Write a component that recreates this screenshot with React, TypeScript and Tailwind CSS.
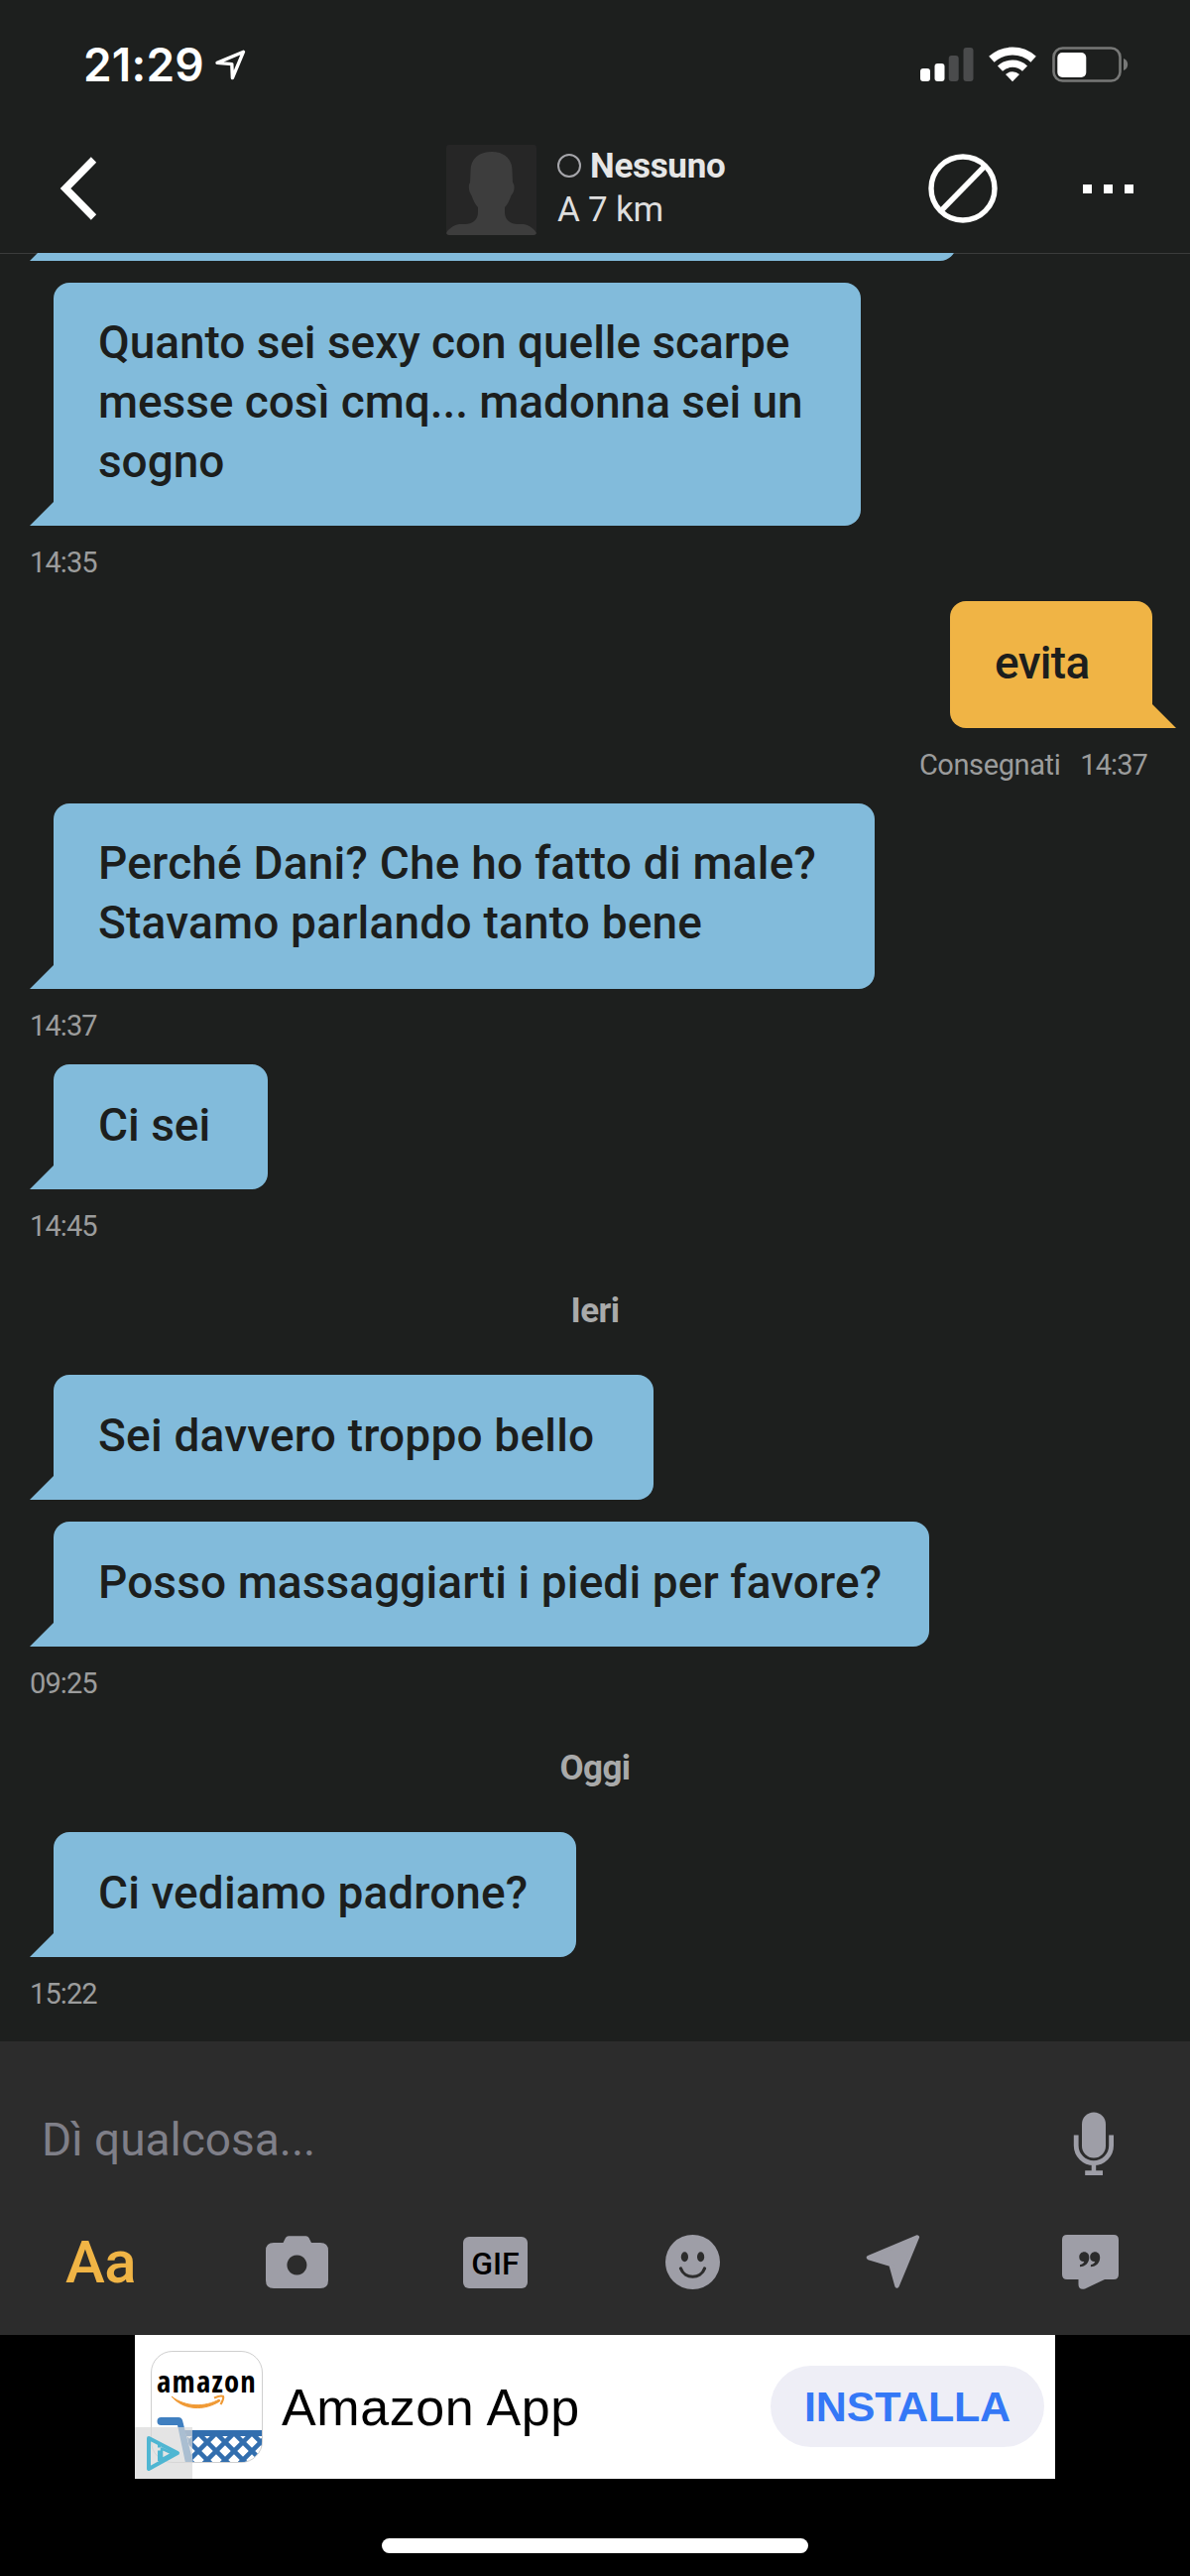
import type { ReactNode } from 'react'
import clsx from 'clsx'

type Message = {
  lines: string[]
  box: string
  mine?: boolean
  status?: string
  time?: string
}

const SECTIONS: { day?: string; messages: Message[] }[] = [
  {
    messages: [
      {
        lines: ['Quanto sei sexy con quelle scarpe', 'messe così cmq... madonna sei un', 'sogno'],
        box: 'w-[814px] h-[245px] pt-[30px] tracking-[-0.05px]',
        time: '14:35',
      },
      {
        lines: ['evita'],
        box: 'w-[204px] h-[128px] pt-[32px] tracking-[-0.7px]',
        mine: true,
        status: 'Consegnati',
        time: '14:37',
      },
      {
        lines: ['Perché Dani? Che ho fatto di male?', 'Stavamo parlando tanto bene'],
        box: 'w-[828px] h-[187px] pt-[30px] tracking-[0.2px]',
        time: '14:37',
      },
      { lines: ['Ci sei'], box: 'w-[216px] h-[126px] pt-[31px]', time: '14:45' },
    ],
  },
  {
    day: 'Ieri',
    messages: [
      { lines: ['Sei davvero troppo bello'], box: 'w-[605px] h-[126px] pt-[31px] tracking-[0.2px]' },
      {
        lines: ['Posso massaggiarti i piedi per favore?'],
        box: 'w-[883px] h-[126px] pt-[31px] tracking-[0.1px]',
        time: '09:25',
      },
    ],
  },
  {
    day: 'Oggi',
    messages: [{ lines: ['Ci vediamo padrone?'], box: 'w-[527px] h-[126px] pt-[31px] tracking-[0.1px]', time: '15:22' }],
  },
]

function StatusBar() {
  return (
    <div className="flex h-[125px] items-start pt-[45px] pl-[84px] pr-[62px]">
      <span className="w-[131px] font-['Inter'] text-[46px] font-semibold leading-[41px] tracking-[0.2px] text-white">
        21:29
      </span>
      <svg width="36" height="36" viewBox="0 0 36 36" className="mt-[3px]" fill="none">
        <path d="M30.5 4.2L4 15.4l14.8 1.2.6 14z" stroke="#fff" strokeWidth="3.4" strokeLinejoin="round" />
      </svg>
      <div className="ml-auto flex items-start pt-[2px]">
        <svg width="54" height="36" viewBox="0 0 54 36">
          <rect x="0" y="22" width="10" height="13" rx="3" fill="#fff" />
          <rect x="14.5" y="17" width="10" height="18" rx="3" fill="#fff" />
          <rect x="28.7" y="9" width="10" height="26" rx="3" fill="#4a4b4c" />
          <rect x="43.5" y="1" width="10" height="34" rx="3" fill="#4a4b4c" />
        </svg>
        <svg width="48" height="36" viewBox="0 0 48 36" className="ml-[15px]" fill="none" stroke="#fff">
          <path d="M2.9 12.8A31 31 0 0 1 45.1 12.8" strokeWidth="8" />
          <path d="M11.5 22.1A18.3 18.3 0 0 1 36.5 22.1" strokeWidth="7.4" />
          <path d="M24 35.2L17 28A10.3 10.3 0 0 1 31 28Z" fill="#fff" stroke="none" />
        </svg>
        <svg width="77" height="36" viewBox="0 0 77 36" className="ml-[16px]">
          <rect x="1.5" y="1.5" width="67" height="33" rx="9" fill="none" stroke="#777877" strokeWidth="2.6" />
          <rect x="5.3" y="6" width="29" height="25" rx="5" fill="#fff" />
          <path d="M72 12c3 1 4.2 3.5 4.2 6s-1.2 5-4.2 6z" fill="#777877" />
        </svg>
      </div>
    </div>
  )
}

function ChatHeader() {
  return (
    <header className="flex h-[130px] items-center pl-[60px] pr-[57px]">
      <svg width="38" height="64" viewBox="0 0 38 64" fill="none">
        <path d="M34.5 3L6 32l28.5 29" stroke="#fff" strokeWidth="7.5" />
      </svg>
      <svg width="91" height="91" viewBox="0 0 91 91" className="ml-[352px] mt-[3px] rounded-[3px] bg-[#262626]">
        <path
          d="M46 7C33 7 24.5 14 24.5 26L24 38C22 41 22.5 47 25.5 51C27 55 29 60 32 63V68C32 76 26 80 19 80H13C7 81 2 85 0 89V91H91V89C89 85 84 81 78 80H72C65 80 59 76 59 68V63C62 60 64 55 65.5 51C69 47 69.5 41 67 38L66.5 26C66.5 14 58 7 46 7Z"
          fill="#3d3d3d"
        />
      </svg>
      <div className="-mt-[2px] ml-[21px] font-['Roboto'] text-[35px] leading-[43px] text-[#e6e6e6]">
        <div className="mb-[1px] flex items-center">
          <span className="mr-[9px] h-[24px] w-[24px] rounded-full border-[2.5px] border-[#a6a6ab]" />
          <span className="font-bold tracking-[-0.3px]">Nessuno</span>
        </div>
        <div className="tracking-[-0.2px] text-[#dedede]">A 7 km</div>
      </div>
      <svg width="70" height="70" viewBox="0 0 70 70" className="ml-auto" fill="none" stroke="#fff" strokeWidth="5.4">
        <circle cx="35" cy="35" r="32" />
        <path d="M57 12.5L13 57.5" />
      </svg>
      <div className="ml-[86px] flex gap-[12px]">
        <span className="h-[9px] w-[9px] bg-white" />
        <span className="h-[9px] w-[9px] bg-white" />
        <span className="h-[9px] w-[9px] bg-white" />
      </div>
    </header>
  )
}

function Bubble({ mine, className, children }: { mine?: boolean; className: string; children?: ReactNode }) {
  return (
    <div
      className={clsx(
        "relative shrink-0 rounded-[16px] pl-[45px] font-['Roboto'] text-[46px] font-medium leading-[60px] whitespace-nowrap text-[#1c1e1d]",
        mine ? 'mr-[38px] self-end rounded-br-none bg-[#f0b445]' : 'ml-[54px] rounded-bl-none bg-[#82bbdb]',
        className,
      )}
    >
      {/* tail */}
      <span
        className={clsx(
          'absolute bottom-0 h-[25px] w-[25px]',
          mine
            ? '-right-[24px] bg-[#f0b445] [clip-path:polygon(0_0,100%_100%,0_100%)]'
            : '-left-[24px] bg-[#82bbdb] [clip-path:polygon(100%_0,100%_100%,0_100%)]',
        )}
      />
      {children}
    </div>
  )
}

function Stamp({ message }: { message: Message }) {
  return (
    <div
      className={clsx(
        "flex h-[76px] font-['Roboto'] text-[29px] leading-[74px] text-[#9b9c9c]",
        message.mine ? 'justify-end gap-[20px] pr-[43px]' : 'pl-[30px]',
      )}
    >
      {message.status && <span className="tracking-[-0.4px]">{message.status}</span>}
      <span className="tracking-[-0.9px]">{message.time}</span>
    </div>
  )
}

function Conversation() {
  return (
    <main className="flex h-[1803px] flex-col border-t border-[#3b3c3c]">
      {/* previous message, scrolled under the header */}
      <div className="relative -mt-px mb-[22px] flex h-[8px] shrink-0 flex-col justify-end overflow-hidden">
        <Bubble className="h-[126px] w-[910px]" />
      </div>
      {SECTIONS.map((section, i) => (
        <section key={i} className="flex flex-col">
          {section.day && (
            <h2 className="h-[111px] text-center font-['Roboto'] text-[35px] font-bold leading-[93px] tracking-[-0.6px] text-[#a9aaaa]">
              {section.day}
            </h2>
          )}
          {section.messages.map((message) => (
            <div key={message.lines[0]} className={clsx('flex flex-col', !message.time && 'mb-[22px]')}>
              <Bubble mine={message.mine} className={message.box}>
                {message.lines.map((line) => (
                  <p key={line}>{line}</p>
                ))}
              </Bubble>
              {message.time && <Stamp message={message} />}
            </div>
          ))}
        </section>
      ))}
    </main>
  )
}

function Composer() {
  return (
    <div className="h-[296px] bg-[#2c2c2c]">
      <div className="flex h-[136px] items-start justify-between pt-[71px] pl-[42px] pr-[76px]">
        <span className="mt-[1px] font-['Roboto'] text-[46px] leading-[54px] text-[#7f7f88]">Dì qualcosa...</span>
        <svg width="42" height="65" viewBox="0 0 42 65" fill="#9e9ea7">
          <rect x="9" y="0.5" width="24" height="46" rx="12" />
          <path d="M3.2 23.5V34a17.7 17.7 0 0 0 35.4 0V23.5" fill="none" stroke="#9e9ea7" strokeWidth="4.8" />
          <path d="M18.7 53h4.5v6.3h6.8V64H12.2v-4.7h6.5z" />
        </svg>
      </div>
      <div className="mt-[58px] flex h-[57px] items-center pl-[66px] pr-[72px]">
        <span className="w-[202px] font-['Roboto'] text-[60px] font-medium leading-[57px] tracking-[-0.5px] text-[#f0b445] font-stretch-[88%]">
          Aa
        </span>
        <svg width="63" height="54" viewBox="0 0 63 54" fill="#9e9ea7">
          <path
            fillRule="evenodd"
            d="M8 7H17.5L20 2Q21 .3 23 .3H40.5Q42.5 .3 43.5 2L46 7H55Q63 7 63 15V45Q63 53 55 53H8Q0 53 0 45V15Q0 7 8 7ZM31.4 19.5a10 10 0 1 0 .01 0z"
          />
        </svg>
        <span className="ml-[136px] flex h-[52px] w-[65px] items-center justify-center rounded-[6px] bg-[#9e9ea7] pt-[2px] font-['Roboto'] text-[32px] font-medium leading-none text-black">
          GIF
        </span>
        <svg width="55" height="55" viewBox="0 0 55 55" className="ml-[139px]">
          <circle cx="27.5" cy="27.5" r="27.5" fill="#9e9ea7" />
          <ellipse cx="19.4" cy="22.3" rx="3.6" ry="5" fill="#2c2c2c" />
          <ellipse cx="35.6" cy="22.3" rx="3.6" ry="5" fill="#2c2c2c" />
          <path
            d="M15.5 34C19.5 45 35.5 45 39.5 34"
            fill="none"
            stroke="#2c2c2c"
            strokeWidth="3.2"
            strokeLinecap="round"
          />
        </svg>
        <svg width="55" height="55" viewBox="0 0 55 55" className="ml-[147px]">
          <path
            d="M51.8 2.5L3 23l22.5 6.8 6 21.7z"
            fill="#9e9ea7"
            stroke="#9e9ea7"
            strokeWidth="4.5"
            strokeLinejoin="round"
          />
        </svg>
        <svg width="57" height="56" viewBox="0 0 57 56" className="ml-auto">
          <path
            d="M5 0H52Q57 0 57 5V40Q57 45 52 45H43L23 54.5Q16.5 56 16.5 50V45H5Q0 45 0 40V5Q0 0 5 0Z"
            fill="#9e9ea7"
          />
          <g fill="#2c2c2c">
            <path d="M22.3 17.3c3 0 5 2.2 5 5.6 0 5-3.5 9-9.3 9.3v-1.9c2.5-.5 4-1.9 4.3-3.3-3.2.2-5-1.7-5-4.6 0-2.9 2.2-5.1 5-5.1z" />
            <path d="M33.2 17.3c3 0 5 2.2 5 5.6 0 5-3.5 9-9.3 9.3v-1.9c2.5-.5 4-1.9 4.3-3.3-3.2.2-5-1.7-5-4.6 0-2.9 2.2-5.1 5-5.1z" />
          </g>
        </svg>
      </div>
    </div>
  )
}

function ShopIcon() {
  return (
    <div className="relative h-[113px] w-[113px] overflow-hidden rounded-[22px] border border-[#cfcfcf] bg-white">
      <span className="absolute top-[11px] left-[5px] font-['Open_Sans'] text-[31px] font-bold leading-[36px] tracking-[1.2px] font-stretch-75% text-black">
        amazon
      </span>
      <svg width="112" height="112" viewBox="0 0 112 112" className="absolute inset-0">
        <path d="M20 45C34 56 54 56 68 48L69 49.5C53 60 32 59 20 45Z" fill="#f09a35" stroke="#f09a35" />
        <path d="M63 46.5Q70 43.5 72 45Q73 47 69.5 53" fill="none" stroke="#f09a35" strokeWidth="2.2" />
        <path d="M9.5 66H27Q30 66 31 69L42 112H34L26 74H9.5A4 4 0 0 1 9.5 66Z" fill="#3f7fc0" />
        <path d="M33 79H112V85H35Z" fill="#326eae" />
        <g clipPath="url(#basket)" stroke="#326eae" strokeWidth="4.6">
          <path d="M20 73l50 50M38 73l50 50M56 73l50 50M74 73l50 50M92 73l50 50M2 73l50 50" />
          <path d="M56 73L6 123M74 73l-50 50M92 73l-50 50M110 73l-50 50M128 73l-50 50M146 73l-50 50" />
        </g>
        <clipPath id="basket">
          <path d="M35 82H112V112H42Z" />
        </clipPath>
      </svg>
    </div>
  )
}

function AdBanner() {
  return (
    <div className="relative mx-auto flex h-[145px] w-[928px] items-center bg-white pl-[16px] pr-[11px]">
      <ShopIcon />
      <span className="ml-[19px] font-['Liberation_Sans'] text-[52px] leading-[60px] tracking-[0.6px] text-black">
        Amazon App
      </span>
      <span className="mb-[1px] ml-auto flex h-[82px] w-[276px] items-center justify-center rounded-full bg-[#eeeef6] font-['Liberation_Sans'] text-[43px] font-bold tracking-[-0.2px] text-[#3478f6]">
        INSTALLA
      </span>
      {/* ad choices badge */}
      <span className="absolute bottom-0 left-0 h-[52px] w-[58px] bg-[#d9d9d9]/70">
        <svg width="58" height="52" viewBox="0 0 58 52" fill="none" stroke="#4fb6d2" strokeLinejoin="round">
          <path d="M14 11L43 26L14 42Z" strokeWidth="4" />
          <path d="M27 21.5L38 26.5L27 32.5Z" strokeWidth="2.6" />
          <path d="M24.5 18v2.5M24.5 23.5V34" strokeWidth="3" />
        </svg>
      </span>
    </div>
  )
}

export default function App() {
  return (
    <div className="h-[2597px] w-[1200px] overflow-hidden bg-[#1d1f1e]">
      <StatusBar />
      <ChatHeader />
      <Conversation />
      <Composer />
      <footer className="h-[243px] bg-black">
        <AdBanner />
        <div className="mx-auto mt-[60px] h-[15px] w-[430px] rounded-full bg-white" />
      </footer>
    </div>
  )
}
